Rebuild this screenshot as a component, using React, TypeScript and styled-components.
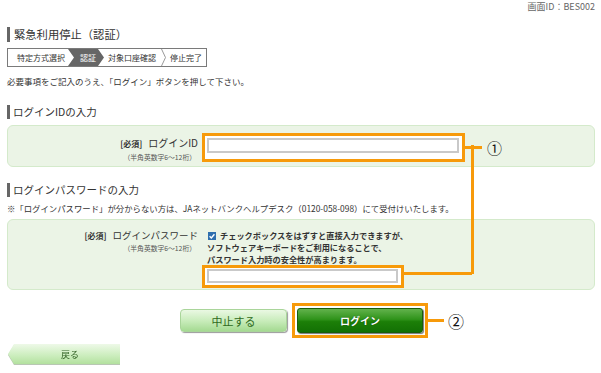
import React from "react";
import styled, { createGlobalStyle } from "styled-components";

const ORANGE = "#f79a0a";

const GlobalStyle = createGlobalStyle`
  html, body { margin: 0; padding: 0; background: #fff; }
  body {
    font-family: "Noto Sans CJK JP", "Noto Sans", sans-serif;
    color: #333;
  }
`;

const Page = styled.div`
  position: relative;
  width: 601px;
  height: 373px;
  padding: 0 6px 0 7px;
  box-sizing: border-box;
  overflow: hidden;
`;

const ScreenId = styled.div`
  display: flex;
  justify-content: flex-end;
  height: 14px;
  line-height: 14px;
  font-size: 9px;
  color: #666;
`;

const Title = styled.h1`
  margin: 13px 0 0;
  height: 15px;
  line-height: 15px;
  border-left: 3px solid #666;
  padding-left: 4px;
  font-size: 11.3px;
  font-weight: normal;
  color: #333;
`;

const StepBar = styled.div`
  margin-top: 6px;
  display: inline-flex;
  height: 17px;
  border: 1px solid #7a7a7a;
  font-size: 8px;
  line-height: 17px;
  color: #333;
`;

const Step = styled.span<{ $active?: boolean; $pl: number; $pr: number }>`
  display: block;
  padding: 0 ${(p) => p.$pr}px 0 ${(p) => p.$pl}px;
  white-space: nowrap;
  background: ${(p) => (p.$active ? "#666" : "transparent")};
  color: ${(p) => (p.$active ? "#fff" : "#333")};
  clip-path: ${(p) =>
    p.$active
      ? "polygon(0 0, calc(100% - 6px) 0, 100% 50%, calc(100% - 6px) 100%, 0 100%, 6px 50%)"
      : "none"};
`;

const Chevron = styled.svg`
  display: block;
  width: 5px;
  height: 17px;
  flex: none;
`;

const Instruction = styled.p`
  margin: 8px 0 0;
  font-size: 8.5px;
  line-height: 12px;
  color: #333;
`;

const SectionHeading = styled.h2<{ $mt: number }>`
  margin: ${(p) => p.$mt}px 0 0;
  height: 14px;
  line-height: 14px;
  border-left: 3px solid #666;
  padding-left: 3px;
  font-size: 10.5px;
  font-weight: normal;
  color: #333;
`;

const Note = styled.p`
  margin: 5px 0 0;
  font-size: 8.4px;
  line-height: 12px;
  color: #333;
  white-space: nowrap;
`;

const Panel = styled.div<{ $mt: number; $pt: number; $pb: number }>`
  margin-top: ${(p) => p.$mt}px;
  display: flex;
  align-items: flex-start;
  background: #ebf4e6;
  border: 1px solid #d4eacb;
  border-radius: 6px;
  padding: ${(p) => p.$pt}px 0 ${(p) => p.$pb}px 0;
`;

const LabelCol = styled.div<{ $pt: number }>`
  width: 190px;
  flex: none;
  text-align: right;
  padding-top: ${(p) => p.$pt}px;
`;

const LabelMain = styled.div<{ $size: number }>`
  line-height: 13px;
  font-size: ${(p) => p.$size}px;
  color: #333;
  white-space: nowrap;
`;

const Required = styled.span`
  font-size: 8px;
  font-weight: bold;
  margin-right: 6px;
`;

const LabelSub = styled.div<{ $mt: number }>`
  margin-top: ${(p) => p.$mt}px;
  line-height: 9px;
  font-size: 6.8px;
  color: #555;
  padding-right: 2px;
  white-space: nowrap;
`;

const FieldCol = styled.div`
  margin-left: 4px;
  display: flex;
  flex-direction: column;
`;

const FieldRow = styled.div`
  display: flex;
  align-items: flex-start;
`;

const OrangeBox = styled.div<{ $pad: string }>`
  display: flex;
  border: 3px solid ${ORANGE};
  background: #fff;
  padding: ${(p) => p.$pad};
`;

const TextInput = styled.input<{ $w: number; $h: number }>`
  width: ${(p) => p.$w}px;
  height: ${(p) => p.$h}px;
  box-sizing: border-box;
  border: 2px solid #c9c9c9;
  padding: 0;
  margin: 0;
  outline: none;
  background: #fff;
`;

const HLine = styled.div<{ $w: number; $mt: number }>`
  width: ${(p) => p.$w}px;
  height: 3px;
  margin-top: ${(p) => p.$mt}px;
  background: ${ORANGE};
  flex: none;
`;

const VLine = styled.div`
  position: absolute;
  left: 471px;
  top: 145px;
  width: 3px;
  height: 129px;
  background: ${ORANGE};
`;

const Marker = styled.span<{ $size: number; $mt: number; $ml: number }>`
  font-size: ${(p) => p.$size}px;
  line-height: ${(p) => p.$size}px;
  margin-top: ${(p) => p.$mt}px;
  margin-left: ${(p) => p.$ml}px;
  color: #111;
`;

const CheckText = styled.div`
  margin-left: 5px;
  font-size: 8.2px;
  font-weight: bold;
  line-height: 12px;
  color: #333;
  white-space: nowrap;
`;

const CheckIcon = styled.svg`
  display: inline-block;
  width: 8px;
  height: 8px;
  margin: 0 4px 0 1px;
  vertical-align: -1px;
`;

const ButtonRow = styled.div`
  margin-top: 13px;
  padding-left: 173px;
  display: flex;
  align-items: center;
  gap: 5px;
`;

const CancelButton = styled.button`
  width: 107px;
  height: 23px;
  box-sizing: border-box;
  border: 1px solid #a9d59a;
  border-radius: 4px;
  background: linear-gradient(#eaf8e3, #c6ebb8 55%, #a5da92);
  box-shadow: 1px 1px 1px #9a9a9a;
  font-family: inherit;
  font-size: 11px;
  color: #2f6a20;
  padding: 0;
  cursor: pointer;
`;

const LoginFrame = styled.div`
  display: flex;
  border: 3px solid ${ORANGE};
  padding: 2px;
  background: #fff;
`;

const LoginButton = styled.button`
  width: 126px;
  height: 25px;
  box-sizing: border-box;
  border: 1px solid #1a5e0d;
  border-radius: 3px;
  background: linear-gradient(#62b24c, #2f931a 45%, #1c7f08 55%, #137004);
  box-shadow: 1px 1px 1px #777;
  font-family: inherit;
  font-size: 10px;
  font-weight: bold;
  color: #fff;
  text-shadow: 0 0 1px #0b3d04;
  padding: 0;
  cursor: pointer;
`;

const LoginAnnot = styled.div`
  display: flex;
  align-items: center;
  margin-left: -5px;
`;

const BackWrap = styled.div`
  margin-top: 6px;
  margin-left: 1px;
  width: 112px;
  filter: drop-shadow(0 1px 0 #b9c7b4);
`;

const BackButton = styled.button`
  display: block;
  width: 112px;
  height: 20px;
  border: none;
  padding: 0 0 0 12px;
  background: linear-gradient(#eef9e8, #cdeebf 55%, #b3e19f);
  clip-path: polygon(6px 0, 100% 0, 100% 100%, 6px 100%, 0 50%);
  font-family: inherit;
  font-size: 9px;
  color: #2f5f22;
  cursor: pointer;
`;

const Sep = () => (
  <Chevron viewBox="0 0 5 17">
    <polyline points="0.5,0 4.5,8.5 0.5,17" fill="none" stroke="#9a9a9a" strokeWidth="1" />
  </Chevron>
);

export default function App() {
  return (
    <>
      <GlobalStyle />
      <Page>
        <ScreenId>画面ID：BES002</ScreenId>
        <Title>緊急利用停止（認証）</Title>
        <StepBar>
          <Step $pl={9} $pr={3}>特定方式選択</Step>
          <Step $active $pl={12} $pr={8}>認証</Step>
          <Step $pl={4} $pr={5}>対象口座確認</Step>
          <Sep />
          <Step $pl={4} $pr={4}>停止完了</Step>
        </StepBar>
        <Instruction>必要事項をご記入のうえ、「ログイン」ボタンを押して下さい。</Instruction>

        <SectionHeading $mt={18}>ログインIDの入力</SectionHeading>
        <Panel $mt={6} $pt={7} $pb={4}>
          <LabelCol $pt={3}>
            <LabelMain $size={10}>
              <Required>[必須]</Required>ログインID
            </LabelMain>
            <LabelSub $mt={3}>（半角英数字6～12桁）</LabelSub>
          </LabelCol>
          <FieldCol>
            <FieldRow>
              <OrangeBox $pad="2px 3px 6px 2px">
                <TextInput $w={252} $h={15} type="text" />
              </OrangeBox>
              <HLine $w={17} $mt={13} />
              <Marker $size={15} $mt={7} $ml={5}>①</Marker>
            </FieldRow>
          </FieldCol>
        </Panel>

        <SectionHeading $mt={16}>ログインパスワードの入力</SectionHeading>
        <Note>※「ログインパスワード」が分からない方は、JAネットバンクヘルプデスク（0120-058-098）にて受付けいたします。</Note>
        <Panel $mt={5} $pt={9} $pb={1}>
          <LabelCol $pt={0}>
            <LabelMain $size={9.5}>
              <Required>[必須]</Required>ログインパスワード
            </LabelMain>
            <LabelSub $mt={2}>（半角英数字6～12桁）</LabelSub>
          </LabelCol>
          <FieldCol>
            <CheckText>
              <CheckIcon viewBox="0 0 8 8">
                <rect x="0" y="0" width="8" height="8" fill="#2f6fae" />
                <polyline points="1.6,4.2 3.3,5.9 6.4,2.2" fill="none" stroke="#fff" strokeWidth="1.4" />
              </CheckIcon>
              チェックボックスをはずすと直接入力できますが、
              <br />
              ソフトウェアキーボードをご利用になることで、
              <br />
              パスワード入力時の安全性が高まります。
            </CheckText>
            <FieldRow>
              <OrangeBox $pad="1px 3px 2px 2px">
                <TextInput $w={191} $h={14} type="password" />
              </OrangeBox>
              <HLine $w={68} $mt={7} />
            </FieldRow>
          </FieldCol>
        </Panel>

        <ButtonRow>
          <CancelButton type="button">中止する</CancelButton>
          <LoginFrame>
            <LoginButton type="button">ログイン</LoginButton>
          </LoginFrame>
          <LoginAnnot>
            <HLine $w={16} $mt={0} />
            <Marker $size={16} $mt={0} $ml={4}>②</Marker>
          </LoginAnnot>
        </ButtonRow>

        <BackWrap>
          <BackButton type="button">戻る</BackButton>
        </BackWrap>

        <VLine />
      </Page>
    </>
  );
}
